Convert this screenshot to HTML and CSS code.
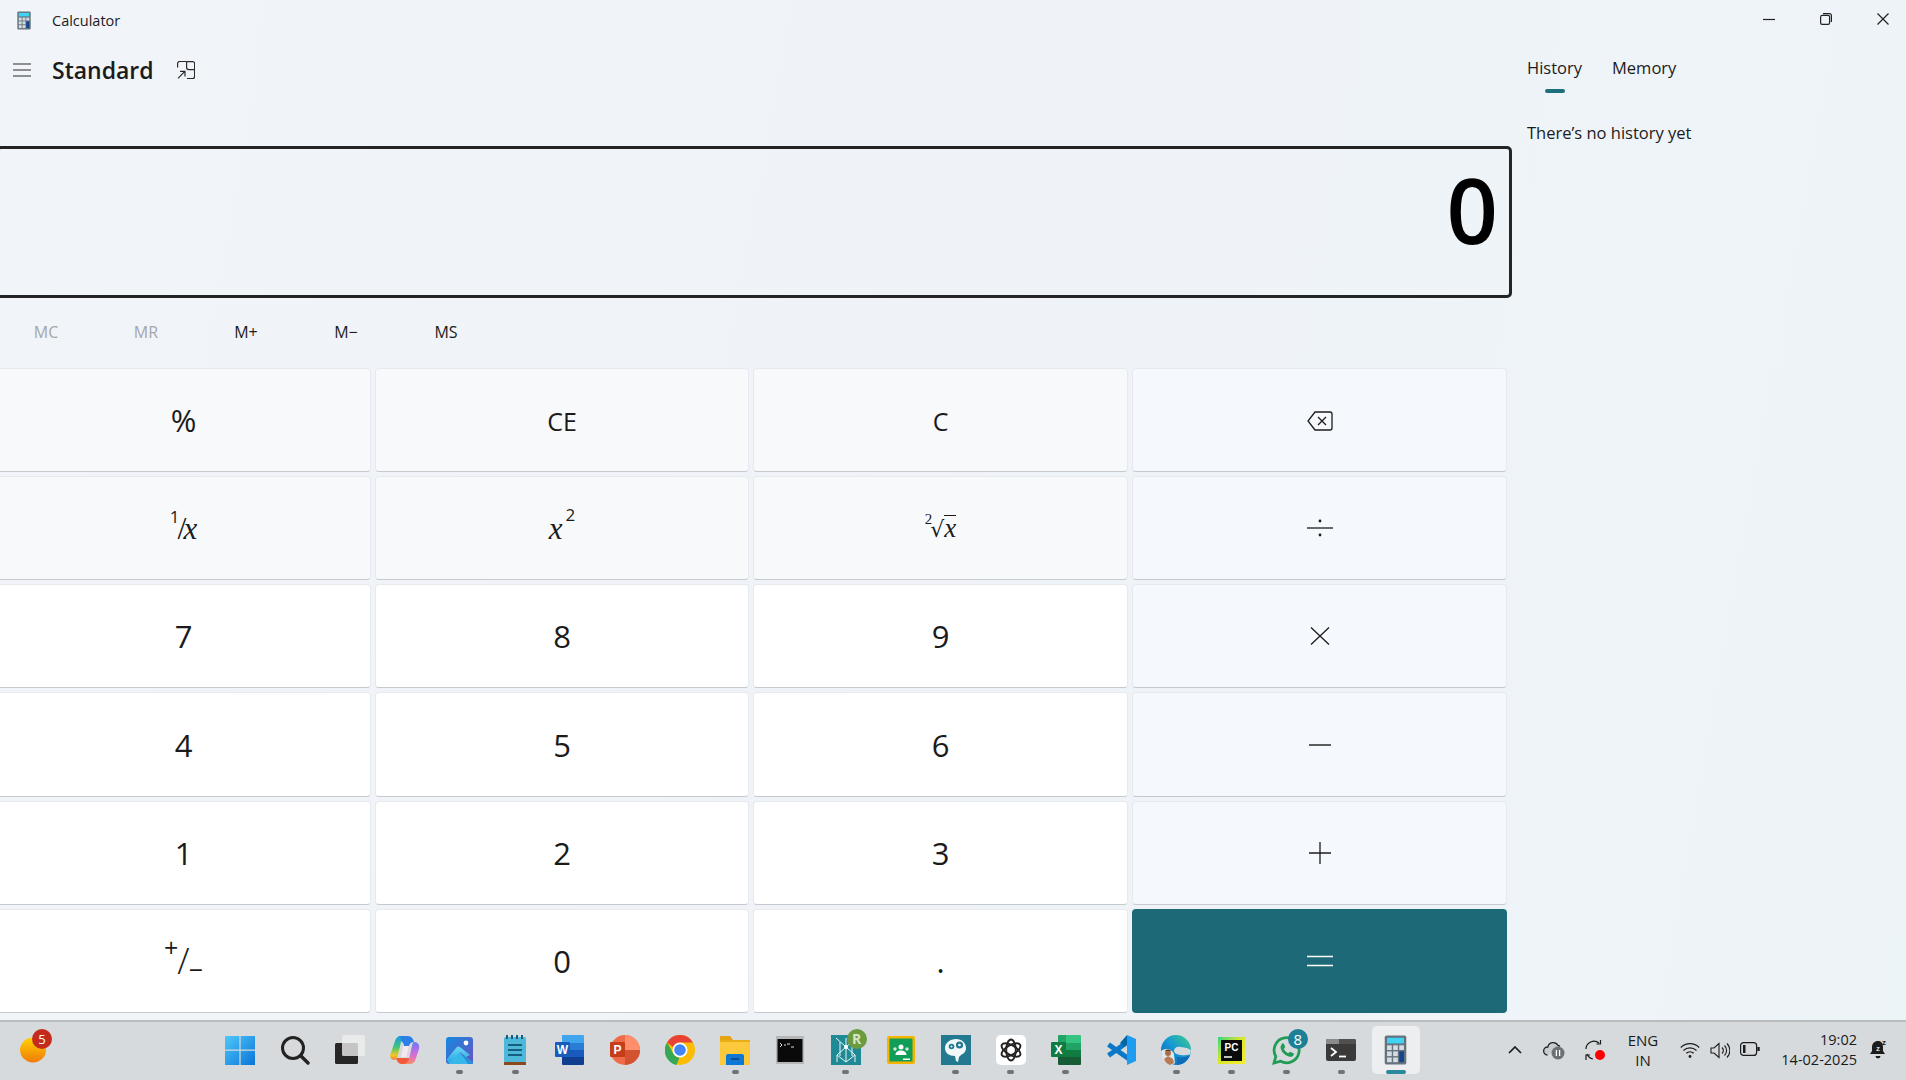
FILE: index.html
```html
<!DOCTYPE html>
<html lang="en">
<head>
<meta charset="UTF-8">
<title>Calculator</title>
<link rel="stylesheet" href="styles.css">
</head>
<body>
	<svg class="defs" width="0" height="0">
		<defs>
			<symbol id="calc" viewBox="0 0 24 32">
				<rect x="0.5" y="0.5" width="23" height="31" rx="2" fill="#66737e"/>
				<rect x="3" y="3" width="18" height="6" fill="#3fd4f4"/>
				<g fill="#d5dde3">
					<rect x="3" y="11" width="5" height="5"/><rect x="9.5" y="11" width="5" height="5"/><rect x="16" y="11" width="5" height="5"/>
					<rect x="3" y="17.5" width="5" height="5"/><rect x="9.5" y="17.5" width="5" height="5"/>
					<rect x="3" y="24" width="5" height="5"/><rect x="9.5" y="24" width="5" height="5"/>
				</g>
				<rect x="16" y="17.5" width="5" height="11.5" fill="#14468f"/>
			</symbol>
			<linearGradient id="gWin" x1="0" y1="0" x2="1" y2="1"><stop offset="0" stop-color="#4fc8fa"/><stop offset="1" stop-color="#0a74d8"/></linearGradient>
			<linearGradient id="gSun" x1="0" y1="0" x2="0" y2="1"><stop offset="0" stop-color="#ffd400"/><stop offset="1" stop-color="#f07a0a"/></linearGradient>
			<linearGradient id="gCopA" x1="0" y1="0" x2="0" y2="1"><stop offset="0" stop-color="#1a9ae6"/><stop offset="0.45" stop-color="#3cc47c"/><stop offset="0.8" stop-color="#f2c81e"/><stop offset="1" stop-color="#f0803a"/></linearGradient>
			<linearGradient id="gCopB" x1="0" y1="0" x2="0" y2="1"><stop offset="0" stop-color="#6a78f0"/><stop offset="0.5" stop-color="#c96fe0"/><stop offset="0.8" stop-color="#ee78a8"/><stop offset="1" stop-color="#f7925a"/></linearGradient>
			<linearGradient id="gPhoto" x1="0" y1="0" x2="1" y2="1"><stop offset="0" stop-color="#1589e0"/><stop offset="1" stop-color="#6a52c0"/></linearGradient>
			<linearGradient id="gPeak" x1="0" y1="0" x2="0" y2="1"><stop offset="0" stop-color="#68d8f2"/><stop offset="1" stop-color="#24a4e6"/></linearGradient>
			<linearGradient id="gEdge" x1="0" y1="1" x2="1" y2="0"><stop offset="0" stop-color="#0c59a4"/><stop offset="0.5" stop-color="#1497d6"/><stop offset="1" stop-color="#3fd08a"/></linearGradient>
			<linearGradient id="gPc" x1="0" y1="0" x2="1" y2="1"><stop offset="0" stop-color="#2fd58a"/><stop offset="0.45" stop-color="#d9e62a"/><stop offset="1" stop-color="#f2ee30"/></linearGradient>
		</defs>
	</svg>

	<div class="window">
		<div class="titlebar">
			<svg class="app-icon"><use href="#calc"/></svg>
			<span class="app-name">Calculator</span>
			<div class="win-btns">
				<svg width="12" height="12" viewBox="0 0 12 12"><path d="M0 6.5h12" stroke="#222" stroke-width="1.2"/></svg>
				<svg width="12" height="12" viewBox="0 0 12 12" fill="none" stroke="#222" stroke-width="1.2"><rect x="0.6" y="2.4" width="9" height="9" rx="1.6"/><path d="M3 0.6h6.4a2 2 0 0 1 2 2V9"/></svg>
				<svg width="12" height="12" viewBox="0 0 12 12"><path d="M0.5 0.5l11 11M11.5 0.5l-11 11" stroke="#222" stroke-width="1.2"/></svg>
			</div>
		</div>

		<div class="content">
			<div class="calc">
				<div class="calc-head">
					<svg class="burger" width="18" height="14" viewBox="0 0 18 14"><path d="M0 1h18M0 7h18M0 13h18" stroke="#2b2b2b" stroke-width="1.2"/></svg>
					<h1>Standard</h1>
					<svg class="keep" width="18" height="18" viewBox="0 0 18 18" fill="none" stroke="#2b2b2b" stroke-width="1.2"><path d="M0.6 6.5V2.5a2 2 0 0 1 2-2h7"/><path d="M9.6 0.6h6a2 2 0 0 1 2 2v13a2 2 0 0 1-2 2H10"/><path d="M9.6 0.6v6a2 2 0 0 0 2 2h6"/><path d="M1 17.4L7.6 10.6M3 10.4h5v5"/></svg>
				</div>

				<div class="display"><span>0</span></div>

				<div class="memory">
					<span class="off">MC</span>
					<span class="off">MR</span>
					<span>M+</span>
					<span>M&minus;</span>
					<span>MS</span>
				</div>

				<div class="keys">
					<div class="key fn">%</div>
					<div class="key fn small">CE</div>
					<div class="key fn small">C</div>
					<div class="key op low">
						<svg width="26" height="20" viewBox="0 0 26 20" fill="none" stroke="#1c1c1c" stroke-width="1.3"><path d="M8 1h15a2 2 0 0 1 2 2v14a2 2 0 0 1-2 2H8l-7-9z"/><path d="M11 6l8 8M19 6l-8 8"/></svg>
					</div>

					<div class="key fn"><span class="math inv"><sup>1</sup><span class="sl">/</span><i>x</i></span></div>
					<div class="key fn"><span class="math"><i>x</i><sup class="sq">2</sup></span></div>
					<div class="key fn"><span class="math root"><sup>2</sup><span class="rad">&radic;</span><i class="over">x</i></span></div>
					<div class="key op">
						<svg width="26" height="18" viewBox="0 0 26 18"><path d="M0 9h26" stroke="#1c1c1c" stroke-width="1.3"/><circle cx="13" cy="2" r="1.4" fill="#1c1c1c"/><circle cx="13" cy="16" r="1.4" fill="#1c1c1c"/></svg>
					</div>

					<div class="key">7</div>
					<div class="key">8</div>
					<div class="key">9</div>
					<div class="key op">
						<svg width="20" height="18" viewBox="0 0 20 18"><path d="M1 0.5l18 17M19 0.5l-18 17" stroke="#1c1c1c" stroke-width="1.3"/></svg>
					</div>

					<div class="key">4</div>
					<div class="key">5</div>
					<div class="key">6</div>
					<div class="key op">
						<svg width="22" height="4" viewBox="0 0 22 4"><path d="M0 2h22" stroke="#1c1c1c" stroke-width="1.4"/></svg>
					</div>

					<div class="key">1</div>
					<div class="key">2</div>
					<div class="key">3</div>
					<div class="key op">
						<svg width="22" height="22" viewBox="0 0 22 22"><path d="M0 11h22M11 0v22" stroke="#1c1c1c" stroke-width="1.3"/></svg>
					</div>

					<div class="key"><span class="math pm"><sup>+</sup><span class="sl">/</span><sub>&minus;</sub></span></div>
					<div class="key">0</div>
					<div class="key">.</div>
					<div class="key equal">
						<svg width="26" height="12" viewBox="0 0 26 12"><path d="M0 1.5h26M0 10.5h26" stroke="#fff" stroke-width="1.6"/></svg>
					</div>
				</div>
			</div>

			<div class="side">
				<div class="tabs">
					<div class="tab on">History<b></b></div>
					<div class="tab">Memory</div>
				</div>
				<p>There&rsquo;s no history yet</p>
			</div>
		</div>
	</div>

	<div class="taskbar">
		<div class="tb-left">
			<div class="tb-sun">
				<svg width="26" height="26" viewBox="0 0 26 26"><ellipse cx="13" cy="13" rx="13" ry="12.5" fill="url(#gSun)"/></svg>
				<span class="badge red">5</span>
			</div>
		</div>

		<div class="tb-apps">
			<div class="app"><svg width="30" height="30" viewBox="0 0 30 30"><path fill="url(#gWin)" d="M0 1h14.4v13.6H0zM15.6 1H30v13.6H15.6zM0 15.8h14.4V30H0zM15.6 15.8H30V30H15.6z"/></svg></div>

			<div class="app"><svg width="30" height="30" viewBox="0 0 30 30" fill="none" stroke="#222"><circle cx="13" cy="13" r="10.5" stroke-width="3"/><path d="M21 21l7 7" stroke-width="3.4" stroke-linecap="round"/></svg></div>

			<div class="app"><svg width="30" height="30" viewBox="0 0 30 30"><rect x="0" y="8" width="23" height="21" rx="1.5" fill="#262626"/><rect x="7" y="0" width="23" height="21" rx="1.5" fill="#eee" fill-opacity="0.8"/></svg></div>

			<div class="app"><svg width="30" height="30" viewBox="0 0 30 30"><path fill="#f25a3c" d="M6 23h13l1 6h-8c-3 0-5-2-6-6z"/><path fill="url(#gCopB)" d="M24 7c4 0 6 3 5 7l-3 9c-1 4-3 6-7 6h-6c3 0 5-2 6-5l3-13c.5-2 1-4 2-4z"/><path fill="url(#gCopA)" d="M10 1h5c-2 1-3 3-4 6l-3 13c-.5 3-2 5-4 5-3 0-4.500-3-3.500-6L5 6c.8-3 3-5 5-5z"/><path fill="#2b7fe8" d="M10 1h8c3 0 5 2 6 6-3 0-4 1-5 4h-5c0-2-1-4-3-5 0-2 0-4-1-5z"/><path fill="#f6e8ee" d="M13.500 11H19l-2.800 11H11z"/></svg></div>

			<div class="app dot-under"><svg width="27" height="27" viewBox="0 0 27 27"><rect width="27" height="27" rx="3" fill="url(#gPhoto)"/><circle cx="20" cy="6" r="2.400" fill="#fff"/><path fill="#2a8fd8" d="M12 27l6-9 9 7v2z"/><path fill="url(#gPeak)" d="M1 22l9-11c1.500-1.800 3-1.800 4.500-.5L24 18l-4 2-6-5-6 9-3 3c-2 0-3.500-2-4-5z"/><path fill="#38b8ea" d="M3 27l11-12 8 12z"/></svg></div>

			<div class="app dot-under"><svg width="24" height="30" viewBox="0 0 24 30"><rect x="1" y="2" width="22" height="25" rx="1.500" fill="#4eb8da"/><rect x="1" y="27" width="22" height="3" fill="#8a4a1c"/><path d="M4 0v4M9 0v4M14 0v4M19 0v4" stroke="#1a5c7c" stroke-width="2"/><path d="M5 10h14M5 15h14M5 20h14" stroke="#14607e" stroke-width="2"/></svg></div>

			<div class="app"><svg width="30" height="30" viewBox="0 0 30 30"><path fill="#41a5ee" d="M7 0h21a1 1 0 0 1 1 1v7H7z"/><path fill="#2b7cd3" d="M7 8h22v7H7z"/><path fill="#185abd" d="M7 15h22v7H7z"/><path fill="#103f91" d="M7 22h22v7a1 1 0 0 1-1 1H8a1 1 0 0 1-1-1z"/><rect x="0" y="7" width="15" height="15" rx="1" fill="#1a5cbc"/><text x="7.5" y="18.500" class="ico-txt">W</text></svg></div>

			<div class="app"><svg width="30" height="30" viewBox="0 0 30 30"><circle cx="15" cy="15" r="15" fill="#ed6c47"/><path fill="#ff8f6b" d="M15 0a15 15 0 0 1 15 15H15z"/><path fill="#d35230" d="M15 30a15 15 0 0 0 15-15H15z"/><rect x="0" y="7" width="15" height="15" rx="1" fill="#c43e1c"/><text x="7.500" y="18.500" class="ico-txt">P</text></svg></div>

			<div class="app"><svg width="30" height="30" viewBox="0 0 30 30"><circle cx="15" cy="15" r="15" fill="#fbbc05"/><path fill="#ea4335" d="M2 7.500A15 15 0 0 1 28 7.500H15a7.500 7.500 0 0 0-7 4.500z"/><path fill="#34a853" d="M2 7.500l6.500 11.300a7.500 7.500 0 0 0 6 3.700L11.500 30A15 15 0 0 1 2 7.500z"/><circle cx="15" cy="15" r="7.500" fill="#fff"/><circle cx="15" cy="15" r="5.800" fill="#4285f4"/></svg></div>

			<div class="app dot-under"><svg width="30" height="30" viewBox="0 0 30 30"><path fill="#e6a412" d="M0 2a1 1 0 0 1 1-1h9l3 4H0z"/><path fill="#fcc93c" d="M0 5h30v25H0z"/><path fill="#e9ad18" d="M0 5h30v2H0z"/><path fill="#0a78d4" d="M6 21a2 2 0 0 1 2-2h14a2 2 0 0 1 2 2v9H6z"/><path d="M11 24h8" stroke="#063f78" stroke-width="1.500"/></svg></div>

			<div class="app"><svg width="28" height="28" viewBox="0 0 28 28"><rect width="28" height="28" fill="#b4b6b8"/><rect x="1.500" y="3" width="25" height="23" fill="#0a0a0a"/><path d="M4 7l2 2-2 2M8 9h2M11 8h3M15 11h3" stroke="#ddd" stroke-width="1" fill="none"/></svg></div>

			<div class="app dot-under">
				<svg width="30" height="30" viewBox="0 0 30 30"><rect width="30" height="30" fill="#1f8a96"/><g stroke="#eaf7f8" stroke-width="1" fill="none"><path d="M15 3v24M15 12L5 3M15 12L25 3M15 12L6 20v7M15 12l9 8v7M9 7v14M21 7v14M6 20l9 7 9-7"/></g><circle cx="15" cy="12" r="2" fill="#fff"/></svg>
				<span class="badge green">R</span>
			</div>

			<div class="app"><svg width="28" height="28" viewBox="0 0 28 28"><rect width="28" height="28" rx="2" fill="#f5b400"/><rect x="2.500" y="2.500" width="23" height="23" fill="#109d58"/><circle cx="14" cy="11" r="2.500" fill="#fff"/><circle cx="8" cy="13" r="1.700" fill="#cfe9da"/><circle cx="20" cy="13" r="1.700" fill="#cfe9da"/><path fill="#fff" d="M8.500 19c0-3 2.500-4.500 5.500-4.500s5.500 1.500 5.500 4.500zM16 22.500h7v1.500h-7z"/></svg></div>

			<div class="app dot-under"><svg width="30" height="30" viewBox="0 0 30 30"><rect width="30" height="30" fill="#23798f"/><path fill="#f2f8f9" d="M15 4c6 0 10 4 10 9 0 4-3 6-5 7l-2 2-1 5-2-1-1-5c-6 0-10-3-10-8 0-5 5-9 11-9z"/><circle cx="10.500" cy="11.500" r="2.800" fill="#23798f"/><circle cx="18.500" cy="10" r="3.600" fill="#23798f"/><circle cx="10.500" cy="11.500" r="1" fill="#f2f8f9"/><circle cx="18.500" cy="10" r="1.300" fill="#f2f8f9"/></svg></div>

			<div class="app dot-under"><svg width="30" height="30" viewBox="0 0 30 30"><rect width="30" height="30" rx="5" fill="#fff"/><g fill="none" stroke="#222" stroke-width="1.900"><ellipse cx="15" cy="15" rx="4.800" ry="10.500"/><ellipse cx="15" cy="15" rx="4.800" ry="10.500" transform="rotate(60 15 15)"/><ellipse cx="15" cy="15" rx="4.800" ry="10.500" transform="rotate(120 15 15)"/></g></svg></div>

			<div class="app dot-under"><svg width="30" height="30" viewBox="0 0 30 30"><path fill="#33c481" d="M15 0h14a1 1 0 0 1 1 1v7H15z"/><path fill="#21a366" d="M7 1a1 1 0 0 1 1-1h7v8H7z"/><path fill="#107c41" d="M7 8h8v7H7z"/><path fill="#21a366" d="M15 8h15v7H15z"/><path fill="#185c37" d="M7 15h8v7H7z"/><path fill="#107c41" d="M15 15h15v7H15z"/><path fill="#185c37" d="M7 22h23v7a1 1 0 0 1-1 1H8a1 1 0 0 1-1-1z"/><rect x="0" y="7" width="15" height="15" rx="1" fill="#107c41"/><text x="7.500" y="18.500" class="ico-txt">X</text></svg></div>

			<div class="app"><svg width="30" height="30" viewBox="0 0 30 30"><g stroke="#0a78c8" stroke-width="5"><path d="M23 6L2.500 20.500M23 24L2.500 9.500"/></g><path fill="#1f9cf0" d="M21 0l9 4v22l-9 4z"/><path fill="#0065a9" d="M21 0v9l-3 2.500-4-3.500z"/></svg></div>

			<div class="app dot-under"><svg width="30" height="30" viewBox="0 0 30 30"><circle cx="15" cy="15" r="15" fill="url(#gEdge)"/><path fill="#d6dadd" d="M13 16c0-3 3-5 7-4 4 .5 8 1 10 3.500l-1 4c-4 1-9 1-12 0-2-.6-4-1.500-4-3.500z"/><path fill="#0f6cb8" d="M16 22c4 1 9 0 13-2-2 6-7 10-13 10z"/><path fill="#dfe7ea" d="M0 17c0-2 3-3 6-3s6 2 7 5l1 9c-1 1-3 2-5 2-5-1-8-6-9-13z"/><circle cx="7" cy="18" r="3" fill="#a86f4c"/><path fill="#5b3a2a" d="M4 16c1-2 5-2 6 0z"/><path fill="#b87a55" d="M3 24l4-3 5 3 1 4-4 2c-3-1-5-3-6-6z"/></svg></div>

			<div class="app dot-under"><svg width="27" height="27" viewBox="0 0 27 27"><rect width="27" height="27" fill="url(#gPc)"/><rect x="3" y="3" width="21" height="21" fill="#0b0b0b"/><text x="13.500" y="13.500" class="ico-txt pc">PC</text><path d="M6 20h8" stroke="#fff" stroke-width="1.500"/></svg></div>

			<div class="app dot-under">
				<svg width="31" height="31" viewBox="0 0 31 31"><path fill="none" stroke="#1f9d55" stroke-width="2.800" d="M3 28l1.800-6.500a12.500 12.500 0 1 1 4.800 4.700z"/><path fill="#1f9d55" d="M10.500 9c1-1 2-1 2.500 0l1 2.500c.2.500 0 1-.4 1.500l-.8 1c1 2 2.500 3.300 4.500 4.300l1-1c.5-.4 1-.5 1.500-.3l2.500 1.200c.7.400.7 1.200.2 2-1 1.500-2.800 2-4.800 1.300-4-1.300-7-4.300-8-8-.4-1.600 0-3 1.300-4.500z"/></svg>
				<span class="badge teal">8</span>
			</div>

			<div class="app dot-under"><svg width="30" height="22" viewBox="0 0 30 22"><rect width="30" height="22" rx="2" fill="#3a3a3a"/><path d="M0 2a2 2 0 0 1 2-2h11v5H0z" fill="#8a8a8a"/><path d="M13 0h15a2 2 0 0 1 2 2v3H13z" fill="#505050"/><path d="M5 9l5 4-5 4" fill="none" stroke="#fff" stroke-width="1.800"/><path d="M13 17.500h7" stroke="#fff" stroke-width="1.800"/></svg></div>

			<div class="app active"><svg width="23" height="30"><use href="#calc"/></svg></div>
		</div>

		<div class="tb-tray">
			<svg class="chev" width="14" height="8" viewBox="0 0 14 8"><path d="M1 7l6-6 6 6" fill="none" stroke="#1c1c1c" stroke-width="1.700"/></svg>
			<svg class="cloud" width="22" height="20" viewBox="0 0 22 20"><path d="M4.500 15a4 4 0 0 1 .3-8A5.500 5.500 0 0 1 15 5.500a4.500 4.500 0 0 1 2 .8" fill="#c8ccd0" stroke="#222" stroke-width="1.300"/><circle cx="15" cy="13" r="6.500" fill="#6c7074"/><path d="M13.400 10v6M16.600 10v6" stroke="#fff" stroke-width="1.300"/></svg>
			<svg class="sync" width="21" height="21" viewBox="0 0 21 21" fill="none" stroke="#1c1c1c" stroke-width="1.200"><path d="M1 9a8 8 0 0 1 13-6M15.500 0v4h-4"/><path d="M2 14a8 8 0 0 0 6 5M1 20v-5h4"/><circle cx="15" cy="15" r="5" fill="#f00" stroke="none"/></svg>
			<div class="lang">ENG<br>IN</div>
			<div class="tray-ico">
				<svg width="20" height="17" viewBox="0 0 20 17" fill="none" stroke="#1c1c1c" stroke-width="1.200"><path d="M0.800 5.500a13 13 0 0 1 18.400 0M3.500 8.500a9.500 9.500 0 0 1 13 0M6.300 11.300a5.500 5.500 0 0 1 7.400 0"/><circle cx="10" cy="14.500" r="1.400" fill="#1c1c1c" stroke="none"/></svg>
				<svg width="20" height="17" viewBox="0 0 20 17" fill="none" stroke="#1c1c1c" stroke-width="1.100"><path d="M1 6h3l5-4.500v14L4 11H1zM12 5.500a4 4 0 0 1 0 6M14.500 3.500a7 7 0 0 1 0 10M17 1.500a10 10 0 0 1 0 14"/></svg>
				<svg width="20" height="14" viewBox="0 0 20 14" fill="none" stroke="#1c1c1c" stroke-width="1.200"><rect x="0.600" y="0.600" width="16" height="12.800" rx="3"/><rect x="3" y="3" width="2.500" height="8" fill="#1c1c1c" stroke="none"/><path d="M18.500 5v4" stroke-width="2.400"/></svg>
			</div>
			<div class="clock">19:02<br>14-02-2025</div>
			<svg class="bell" width="18" height="22" viewBox="0 0 18 22"><path fill="#1c1c1c" d="M9 2c3.500 0 5 2.600 5 6v4l2 3H1l2-3V8c0-3.400 2.500-6 6-6zM6.500 17h5a2.500 2.500 0 0 1-5 0z"/><text x="9" y="11.500" class="ico-txt zz">z</text><text x="15" y="6" class="ico-txt zz2">z</text></svg>
		</div>
	</div>
</body>
</html>
```

FILE: styles.css
```css
*{margin: 0; padding: 0; box-sizing: border-box;}
html, body{width: 100%; height: 100%; overflow: hidden;}
body{
	display: flex; flex-direction: column;
	font-family: "Open Sans", "Noto Sans", sans-serif;
	color: #1b1b1b;
	background: linear-gradient(100deg, #f1f4f8 0%, #eff3f8 50%, #edf4f8 100%);
}
.defs{position: absolute;}

/* window */
.window{flex: 1; display: flex; flex-direction: column; min-height: 0;}
.titlebar{height: 40px; display: flex; align-items: center; padding-left: 17px;}
.app-icon{width: 14px; height: 19px;}
.app-name{margin-left: 21px; font-size: 14.5px;}
.win-btns{margin-left: auto; display: flex; gap: 45px; padding-right: 17px; margin-top: -2px;}

.content{flex: 1; display: flex; min-height: 0;}
.calc{width: 1516px; margin-left: -4px; flex: none; display: flex; flex-direction: column;}
.calc-head{height: 60px; display: flex; align-items: center; padding-left: 17px;}
.burger{flex: none;}
.calc-head h1{margin-left: 21px; font-size: 23px; font-weight: 600;}
.keep{margin-left: 23px;}

.display{
	margin-top: 46px; height: 152px; flex: none;
	border: 3px solid #242424; border-radius: 5px;
	display: flex; justify-content: flex-end;
	padding-right: 11px;
}
.display span{font-size: 90px; font-weight: 600; line-height: 1; color: #000; margin-top: 15px;}

.memory{height: 68px; margin-bottom: 2px; flex: none; display: flex; align-items: center;}
.memory span{width: 100px; text-align: center; font-size: 16px;}
.memory .off{color: #a4a7aa;}

.keys{
	height: 645px; flex: none;
	display: grid; gap: 4px;
	grid-template-columns: 375px 374px 375px 375px;
	grid-template-rows: repeat(6, 1fr);
}
.key{
	display: flex; align-items: center; justify-content: center;
	background: #fff;
	border: 1px solid #e6eaee; border-bottom-color: #c6cace;
	border-radius: 4px;
	font-size: 31px;
}
.key.fn{background: #f8f9fb;}
.key.op{background: #f5f8fc;}
.key.small{font-size: 25px; padding-top: 2px;}
.key.low{padding-top: 2px;}
.key.equal{background: #1e6978; border: 0;}

.math{font-family: "Liberation Serif", serif; font-size: 31px; display: flex; align-items: baseline; line-height: 1;}
.math i{font-style: italic;}
.math sup{font-size: 15px; align-self: flex-start; margin-top: -3px;}
.math .sl{font-size: 28px; margin: 0 -3px 0 -2px;}
.math .sq{font-size: 17px; margin-left: 3px; margin-top: -7px; font-family: "Open Sans", sans-serif;}
.inv sup{font-family: "Open Sans", sans-serif; font-size: 17px; margin-top: -4px;}
.inv .sl{font-size: 32px; font-weight: 300;}
.root{font-size: 27px;}
.root sup{font-size: 15px; margin-right: -2px;}
.root .rad{font-family: "DejaVu Sans", sans-serif; font-size: 22px;}
.root .over{border-top: 1px solid #1b1b1b; line-height: 0.9;}
.pm{font-family: "Open Sans", sans-serif; font-size: 26px;}
.pm sup{font-size: 25px; margin: 0; align-self: flex-start; margin-top: -8px;}
.pm sub{font-size: 25px; align-self: flex-end; margin-bottom: -3px;}
.pm .sl{font-size: 36px; font-weight: 300; margin: 0 -1px;}

/* history */
.side{flex: 1; padding-left: 15px;}
.tabs{display: flex; gap: 30px; height: 46px; margin-top: 17px;}
.tab{font-size: 16.5px; height: 36px; display: flex; flex-direction: column; align-items: center; line-height: 22px;}
.tab b{display: block; flex: none; width: 20px; height: 3.5px; border-radius: 2px; background: #1e6e7e; margin-top: 10px;}
.side p{font-size: 16.5px; margin-top: 18px;}

/* taskbar */
.taskbar{
	height: 60px; flex: none; display: flex; align-items: center;
	background: #d6dadd; border-top: 2px solid #b9bdc0;
	padding-bottom: 2px;
}
.tb-left{width: 212px; flex: none; padding-left: 20px; display: flex;}
.tb-sun{position: relative; display: flex; margin-top: 0;}
.tb-apps{display: flex;}
.app{width: 55.1px; height: 48px; display: flex; align-items: center; justify-content: center; position: relative; flex: none;}
.app.dot-under::after, .app.active::after{
	content: ""; position: absolute; bottom: 0; left: 50%;
	width: 7px; height: 4px; margin-left: -3.5px;
	border-radius: 2px; background: #6d7275;
}
.app.active{width: 48px; margin-left: 3px; background: #eceef0; border-radius: 5px;}
.app.active::after{width: 20px; margin-left: -10px; background: #2a8a9c;}

.badge{
	position: absolute; width: 20px; height: 20px; border-radius: 50%;
	color: #fff; font-size: 14px; line-height: 20px; text-align: center;
}
.badge.red{background: #c42b1c; right: -6px; top: -8px; font-size: 13px;}
.badge.green{background: #6b9b3e; right: 6.5px; top: 3px; font-weight: 700; color: #d8e6c8;}
.badge.teal{background: #1e7f96; right: 6px; top: 3px; font-size: 15px;}
.ico-txt{font-family: "Liberation Sans", sans-serif; font-weight: 700; font-size: 12px; fill: #fff; text-anchor: middle;}
.ico-txt.pc{font-size: 10px;}
.ico-txt.zz{font-size: 8px; fill: #d6dadd;}
.ico-txt.zz2{font-size: 8px; fill: #1c1c1c;}

.tb-tray{margin-left: auto; display: flex; align-items: center; padding-right: 19px;}
.chev{margin-right: 21px;}
.cloud{margin-right: 20px;}
.lang{width: 74px; text-align: center; font-size: 15px; line-height: 20px;}
.tray-ico{display: flex; gap: 10px;}
.clock{width: 97px; text-align: right; font-size: 14.5px; line-height: 20px;}
.bell{margin-left: 12px;}
```
